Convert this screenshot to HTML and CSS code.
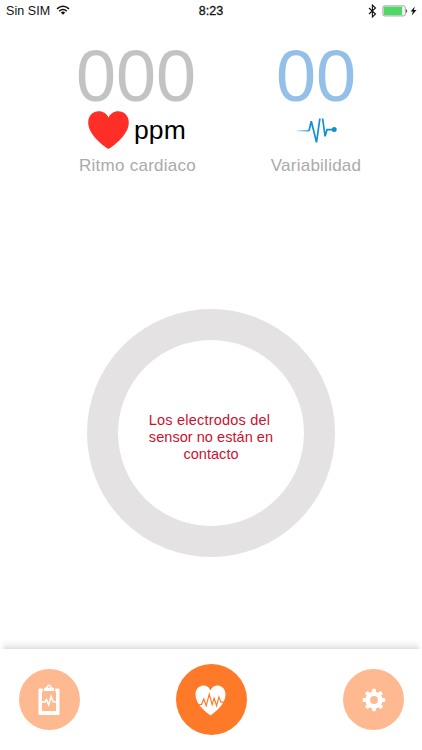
FILE: index.html
```html
<!DOCTYPE html>
<html lang="es">
<head>
<meta charset="utf-8">
<title>Ritmo cardiaco</title>
<link rel="stylesheet" href="styles.css">
</head>
<body>
<div class="screen">
  <header class="status">
    <div class="status-left">
      <span class="carrier">Sin SIM</span>
      <svg class="wifi" width="14" height="10" viewBox="0 0 14 10" fill="none" stroke="#111">
        <path d="M1 3.900Q7-1.300 13 3.900" stroke-width="1.500"/>
        <path d="M3.200 6.100Q7 2.800 10.800 6.100" stroke-width="1.500"/>
        <path d="M4.800 7.400Q7 5.700 9.200 7.400L7 9.700Z" fill="#111" stroke="none"/>
      </svg>
    </div>
    <span class="clock">8:23</span>
    <div class="status-right">
      <svg class="bluetooth" width="9" height="14" viewBox="0 0 9 14" fill="none" stroke="#111" stroke-width="1.100"><path d="M1 4l6.500 6-3.100 3V1l3.100 3L1 10"/></svg>
      <svg width="26" height="12" viewBox="0 0 26 12"><rect x=".9" y=".9" width="22.400" height="10" rx="1.600" fill="#fff" stroke="#888" stroke-width=".8"/><rect x="1.800" y="1.800" width="18.400" height="8.200" rx=".5" fill="#4cd964"/><path d="M24.200 4q2 2 0 4z" fill="#333"/></svg>
      <svg width="7" height="10" viewBox="0 0 7 10"><path d="M4.800.4L.6 5.500h2.300L1.800 9.400 6.500 4.100H3.900z" fill="#111"/></svg>
    </div>
  </header>

  <main class="main">
    <section class="readings">
      <div class="reading">
        <div class="value value-rate">000</div>
        <div class="symbol symbol-rate">
          <svg width="41" height="38" viewBox="0 0 41 38"><path d="M20.500 37.900C15 34.500.2 23.500.2 11.400.2 4.700 5 .2 10.700.2c4.500 0 8.200 2.400 9.800 6.500C22 2.600 25.800.2 30.300.2 36 .2 40.800 4.700 40.800 11.400 40.800 23.500 26 34.500 20.500 37.900z" fill="#ff2f27"/></svg>
          <span class="unit">ppm</span>
        </div>
        <div class="label">Ritmo cardiaco</div>
      </div>
      <div class="reading">
        <div class="value value-variability">00</div>
        <div class="symbol symbol-variability">
          <svg width="42" height="26" viewBox="0 0 42 26" fill="none" stroke="#168fd0" stroke-width="1.700">
            <defs><linearGradient id="fade" gradientUnits="userSpaceOnUse" x1="0" y1="0" x2="14" y2="0"><stop offset="0" stop-color="#168fd0" stop-opacity=".15"/><stop offset="1" stop-color="#168fd0"/></linearGradient></defs>
            <path d="M.8 12.800H13.200" stroke="url(#fade)" stroke-width="1.300"/>
            <path d="M13 12.800l2.300-9.500 5.200 21L23.900.5M26.600.5l2.500 17.800 1.900-6.600h6.500"/>
            <circle cx="38.200" cy="11.600" r="2.500" fill="#168fd0" stroke="none"/>
          </svg>
        </div>
        <div class="label label-variability">Variabilidad</div>
      </div>
    </section>

    <div class="ring">
      <p class="message">
        <span class="line line-first">Los electrodos del</span>
        <span class="line">sensor no están en</span>
        <span class="line">contacto</span>
      </p>
    </div>
  </main>

  <div class="shade"></div>
  <nav class="tabs">
    <a class="tab tab-report">
      <svg width="22" height="32" viewBox="0 0 22 32">
        <path d="M1.500 4.500H20.500a1 1 0 0 1 1 1V30a1 1 0 0 1-1 1H1.500a1 1 0 0 1-1-1V5.500A1 1 0 0 1 1.500 4.500z" fill="#fff"/>
        <path d="M4 8H18V27H4z" fill="#ffb990"/>
        <path d="M4.600 8.600V5.300Q5 3.400 7 3.200 8 3 8.200 2 9 0 11 0T13.800 2Q14 3 15 3.200 17 3.400 17.400 5.300V8.600z" fill="#ffb990"/>
        <path d="M5.800 7V5.200Q6 3.700 7.600 3.500 8.700 3.300 8.900 2 9.400.4 11 .4T13.100 2Q13.300 3.300 14.400 3.500 16 3.700 16.200 5.200V7z" fill="#fff"/>
        <circle cx="11" cy="3" r=".9" fill="#ffb990"/>
        <path d="M3.500 18H7L8.500 15.500l2.200 5.500 2.400-8.400L15.300 18H18.500" fill="none" stroke="#fff" stroke-width="1.500"/>
      </svg>
    </a>
    <a class="tab tab-active">
      <svg width="31" height="31" viewBox="0 0 32 31" preserveAspectRatio="none">
        <path d="M16 30.500C11.500 27.500.5 19.500.5 9.300.5 4 4.200.5 8.700.5c3.300 0 6 1.800 7.300 4.900C17.300 2.300 20 .5 23.300.5c4.500 0 8.200 3.500 8.200 8.800 0 10.200-11 18.200-15.500 21.200z" fill="#fff"/>
        <path d="M3.500 19.500L6.800 19.300 9.100 14l2.400 6.800L14.700 9.300l3 10.300 2-6.400 2.600 7.600 2.400-8.800 2 5.100H31" fill="none" stroke="#ff7a28" stroke-width="1.200"/>
      </svg>
    </a>
    <a class="tab">
      <svg width="24" height="24" viewBox="-12 -12 24 24">
        <g fill="#fff"><circle r="8.600"/>
          <g id="teeth"><rect x="-2" y="-11.300" width="4" height="22.600" rx="1.200"/><rect x="-11.300" y="-2" width="22.600" height="4" rx="1.200"/></g>
          <use href="#teeth" transform="rotate(45) scale(.98)"/>
        </g>
        <circle r="3.900" fill="#ffb990"/>
      </svg>
    </a>
  </nav>
</div>
</body>
</html>
```
FILE: styles.css
```css
* { box-sizing: border-box; }

body {
  margin: 0;
  background: #fff;
  font-family: "Liberation Sans", Arial, sans-serif;
}

.screen {
  width: 422px;
  height: 750px;
  display: flex;
  flex-direction: column;
  overflow: hidden;
}

svg { display: block; flex: none; }

.status {
  height: 22px;
  padding: 0 5px 0 6px;
  display: grid;
  grid-template-columns: 1fr auto 1fr;
  align-items: center;
  font-size: 12.5px;
  color: #111;
}

.status-left, .status-right { display: flex; align-items: center; }
.status-left { gap: 6px; }
.carrier { letter-spacing: .05px; }
.wifi { margin-top: -2px; }
.clock { padding-right: 1px; -webkit-text-stroke: .3px #111; letter-spacing: .1px; }
.status-right { justify-content: flex-end; gap: 2px; }
.bluetooth { margin-right: 3px; }

.main { flex: 1; }

.readings {
  display: grid;
  grid-template-columns: 180px 180px;
  padding: 20px 0 0 46px;
}

.reading {
  display: flex;
  flex-direction: column;
  align-items: center;
}

.value { font-size: 72px; line-height: 68px; }
.value-rate { color: #c3c3c3; }
.value-variability { color: #94bfe9; }

.symbol {
  height: 40px;
  display: flex;
  align-items: center;
}

.symbol-rate { gap: 5px; padding-left: 2px; }
.symbol-variability { padding: 2px 0 0 1px; }

.unit {
  font-size: 26.5px;
  line-height: 30px;
  letter-spacing: .2px;
  color: #000;
}

.label {
  margin-top: 6px;
  padding-left: 3px;
  font-size: 17px;
  line-height: 20px;
  letter-spacing: .25px;
  color: #aaa;
  white-space: nowrap;
}

.label-variability { padding-left: 0; }

.ring {
  width: 248px;
  height: 248px;
  margin: 133px auto 0;
  border: 31px solid #e4e2e3;
  border-radius: 50%;
  display: flex;
  align-items: center;
  justify-content: center;
}

.message {
  margin: 8px 0 0;
  font-size: 14.5px;
  line-height: 17px;
  text-align: center;
  letter-spacing: .05px;
  color: #cc1030;
}

.line { display: block; white-space: nowrap; }
.line-first { padding-right: 3px; letter-spacing: .2px; }

.shade {
  height: 9px;
  background: linear-gradient(#fff, #f2f2f2 60%, #dfdfdf);
  mask-image: linear-gradient(90deg, transparent, #000 6px, #000 416px, transparent);
}

.tabs {
  height: 101px;
  padding: 0 18px 0 19px;
  display: flex;
  align-items: center;
  justify-content: space-between;
}

.tab {
  width: 61px;
  height: 61px;
  border-radius: 50%;
  background: #ffb990;
  display: flex;
  align-items: center;
  justify-content: center;
}

.tab-report { padding-right: 2px; }

.tab-active {
  width: 71px;
  height: 71px;
  padding: 2px 2px 0 0;
  background: #ff7a28;
}
```
